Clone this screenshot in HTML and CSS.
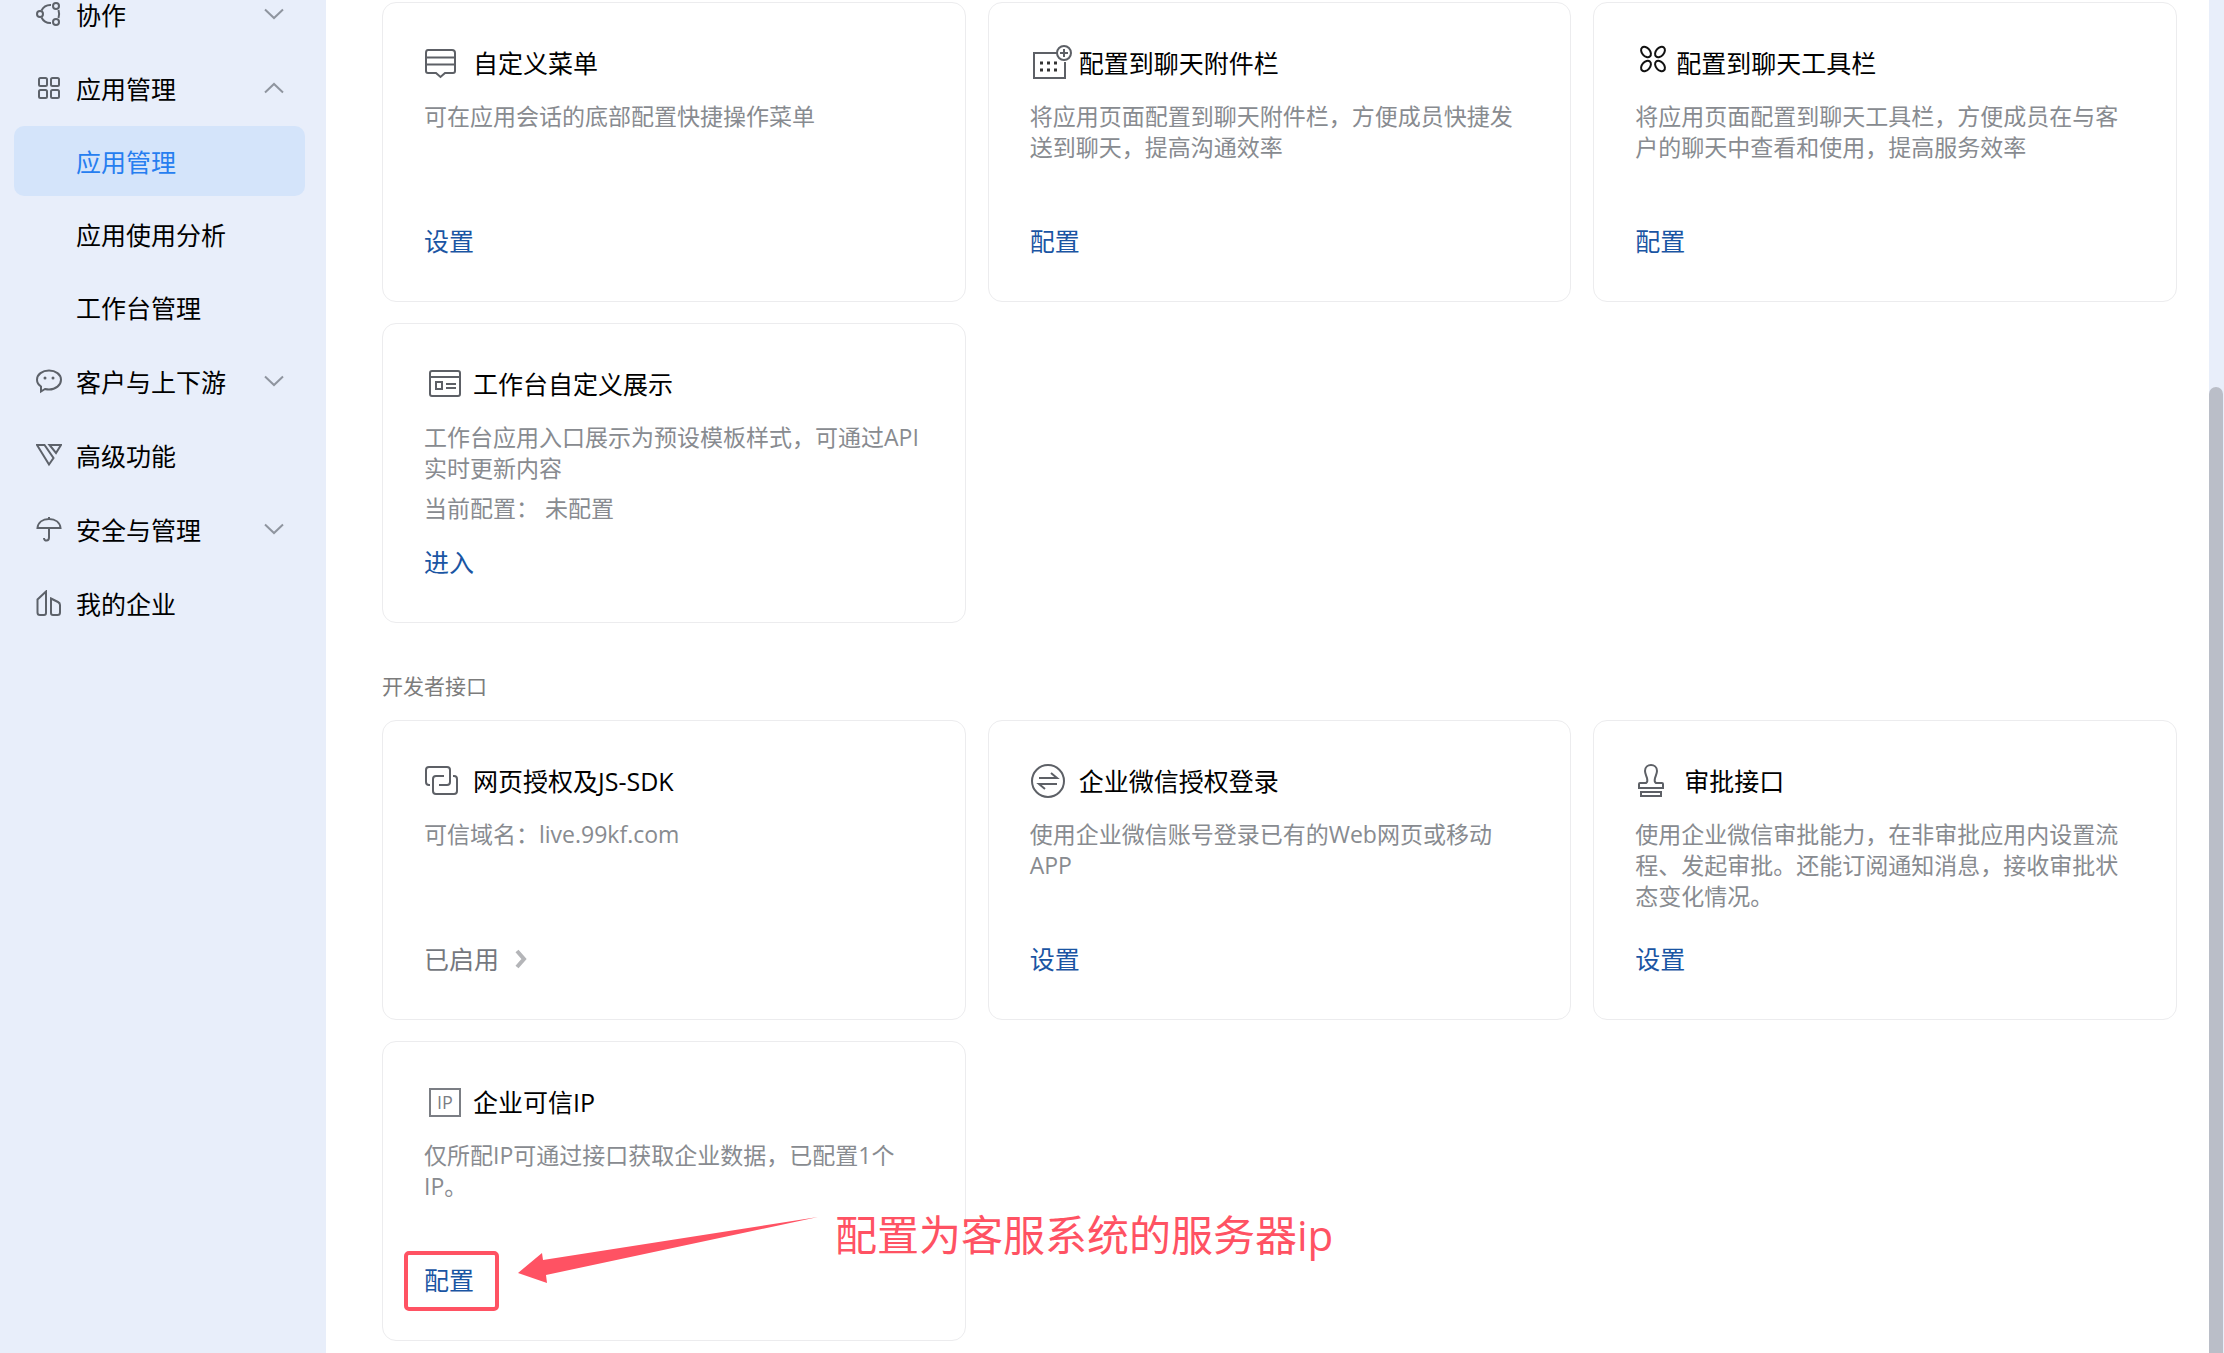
FILE: index.html
```html
<!DOCTYPE html>
<html lang="zh-CN">
<head>
    <meta charset="UTF-8">
    <meta name="viewport" content="width=device-width, initial-scale=1.0">
    <title>应用管理</title>
    <link rel="stylesheet" href="styles.css">
</head>
<body>
<div class="layout">
    <nav class="sidebar">
        <ul class="menu">
            <li>
                <a class="menu-item" href="#">
                    <svg class="menu-icon" viewBox="0 0 26 26"><circle cx="4" cy="13" r="3"/><circle cx="20" cy="5" r="3"/><circle cx="20" cy="21" r="3"/><path d="M5.500 9.500C7.500 5.500 11 3.800 15 4M5.500 16.500C7.500 20.500 11 22.200 15 22M22.500 9C23.300 11.500 23.300 14.500 22.500 17"/></svg>
                    <span>协作</span>
                    <svg class="arrow" viewBox="0 0 20 12"><path d="M1 1.500L10 10L19 1.500"/></svg>
                </a>
            </li>
            <li>
                <a class="menu-item" href="#">
                    <svg class="menu-icon" viewBox="0 0 26 26"><rect x="3" y="3" width="8" height="8" rx="1.500"/><rect x="15" y="3" width="8" height="8" rx="1.500"/><rect x="3" y="15" width="8" height="8" rx="1.500"/><rect x="15" y="15" width="8" height="8" rx="1.500"/></svg>
                    <span>应用管理</span>
                    <svg class="arrow" viewBox="0 0 20 12"><path d="M1 10.500L10 2L19 10.500"/></svg>
                </a>
                <ul class="submenu">
                    <li><a class="menu-item active" href="#">应用管理</a></li>
                    <li><a class="menu-item" href="#">应用使用分析</a></li>
                    <li><a class="menu-item" href="#">工作台管理</a></li>
                </ul>
            </li>
            <li>
                <a class="menu-item" href="#">
                    <svg class="menu-icon" viewBox="0 0 26 26"><path d="M5 18.500C2.500 16.800 1 14.500 1 11.800C1 6.500 6.300 2.500 13 2.500S25 6.500 25 11.800S19.700 21.500 13 21.500C11.500 21.500 10.300 21.300 9 21L5 23.500Z"/><circle class="dot" cx="9" cy="10" r="1.500"/><circle class="dot" cx="17" cy="10" r="1.500"/></svg>
                    <span>客户与上下游</span>
                    <svg class="arrow" viewBox="0 0 20 12"><path d="M1 1.500L10 10L19 1.500"/></svg>
                </a>
            </li>
            <li>
                <a class="menu-item" href="#">
                    <svg class="menu-icon" viewBox="0 0 26 26"><path d="M1 3H8.500L17.500 16L13 22.500ZM13.500 3H25L20 11Z"/></svg>
                    <span>高级功能</span>
                </a>
            </li>
            <li>
                <a class="menu-item" href="#">
                    <svg class="menu-icon" viewBox="0 0 26 26"><path d="M1.500 12C2 6.500 6.500 3 13 3S24 6.500 24.500 12ZM13 1V3M13 12V21.500C13 25.500 8 25.500 8 22"/></svg>
                    <span>安全与管理</span>
                    <svg class="arrow" viewBox="0 0 20 12"><path d="M1 1.500L10 10L19 1.500"/></svg>
                </a>
            </li>
            <li>
                <a class="menu-item" href="#">
                    <svg class="menu-icon" viewBox="0 0 26 26"><path d="M10 1.500V23Q10 25 8 25H4Q1.500 25 1.500 22.500V9.500ZM15 8.500L22 12Q24 13 24 15V22.500Q24 25 21.500 25H17Q15 25 15 23Z"/></svg>
                    <span>我的企业</span>
                </a>
            </li>
        </ul>
    </nav>

    <main class="content">
        <section class="cards">
            <div class="card">
                <h3 class="card-title">
                    <svg class="card-icon" viewBox="0 0 44 36"><path d="M4 5H28Q31 5 31 8V26Q31 28 29 28H21L16.500 32L12 28H4Q2 28 2 26V8Q2 5 4 5ZM2 12.500H31M2 19.500H31"/></svg>
                    自定义菜单
                </h3>
                <p class="card-desc">可在应用会话的底部配置快捷操作菜单</p>
                <a class="card-link" href="#">设置</a>
            </div>
            <div class="card">
                <h3 class="card-title">
                    <svg class="card-icon" viewBox="0 0 44 36"><path d="M27 8H4V33H35V17"/><circle cx="34" cy="8" r="7"/><path d="M30 8H38M34 4V12"/><path class="dots" d="M10 18H13M17 18H20M24 18H27M10 25H13M17 25H20M24 25H27"/></svg>
                    配置到聊天附件栏
                </h3>
                <p class="card-desc">将应用页面配置到聊天附件栏，方便成员快捷发送到聊天，提高沟通效率</p>
                <a class="card-link" href="#">配置</a>
            </div>
            <div class="card">
                <h3 class="card-title tools">
                    <svg class="card-icon dark" viewBox="0 0 44 36"><ellipse cx="11" cy="7" rx="4" ry="6" transform="rotate(-40 11 7)"/><ellipse cx="25" cy="7" rx="4" ry="6" transform="rotate(40 25 7)"/><ellipse cx="11" cy="21" rx="4" ry="6" transform="rotate(40 11 21)"/><ellipse cx="25" cy="21" rx="4" ry="6" transform="rotate(-40 25 21)"/></svg>
                    配置到聊天工具栏
                </h3>
                <p class="card-desc">将应用页面配置到聊天工具栏，方便成员在与客户的聊天中查看和使用，提高服务效率</p>
                <a class="card-link" href="#">配置</a>
            </div>
            <div class="card">
                <h3 class="card-title">
                    <svg class="card-icon" viewBox="0 0 44 36"><rect x="6" y="5" width="30" height="25" rx="2"/><path d="M6 11H36M22 18H32M22 22H32"/><rect x="12" y="16" width="6" height="7"/></svg>
                    工作台自定义展示
                </h3>
                <p class="card-desc">工作台应用入口展示为预设模板样式，可通过API实时更新内容</p>
                <p class="card-status">当前配置： <span>未配置</span></p>
                <a class="card-link" href="#">进入</a>
            </div>
        </section>

        <h2 class="section-title">开发者接口</h2>
        <section class="cards">
            <div class="card">
                <h3 class="card-title">
                    <svg class="card-icon" viewBox="0 0 44 36"><path d="M6 22H5Q2 22 2 19V7Q2 4 5 4H23Q26 4 26 7V19Q26 22 23 22H15"/><path d="M20 13H12Q9 13 9 16V28Q9 31 12 31H30Q33 31 33 28V16Q33 13 30 13H29"/></svg>
                    网页授权及JS-SDK
                </h3>
                <p class="card-desc">可信域名：live.99kf.com</p>
                <a class="card-link enabled" href="#">已启用
                    <svg class="more" viewBox="0 0 12 20"><path d="M2 2L9 10L2 18"/></svg>
                </a>
            </div>
            <div class="card">
                <h3 class="card-title">
                    <svg class="card-icon" viewBox="0 0 44 36"><circle cx="18" cy="18" r="16"/><path d="M9 15H27L21 10M27 21H9L15 26"/></svg>
                    企业微信授权登录
                </h3>
                <p class="card-desc">使用企业微信账号登录已有的Web网页或移动APP</p>
                <a class="card-link" href="#">设置</a>
            </div>
            <div class="card">
                <h3 class="card-title">
                    <svg class="card-icon" viewBox="0 0 44 36"><path d="M4 25V21Q4 20 5 20H11Q13 19 12 15C11 12 10 10 10 8C10 0 22 0 22 8C22 10 21 12 20 15Q19 19 21 20H27Q28 20 28 21V25ZM6 29H26V33H6Z"/></svg>
                    审批接口
                </h3>
                <p class="card-desc">使用企业微信审批能力，在非审批应用内设置流程、发起审批。还能订阅通知消息，接收审批状态变化情况。</p>
                <a class="card-link" href="#">设置</a>
            </div>
            <div class="card">
                <h3 class="card-title">
                    <span class="ip-icon">IP</span>
                    企业可信IP
                </h3>
                <p class="card-desc">仅所配IP可通过接口获取企业数据，已配置1个IP。</p>
                <a class="card-link" href="#">配置</a>
                <!-- note on top of the card -->
                <div class="note-box"></div>
                <svg class="note-arrow" viewBox="0 0 300 68"><path d="M0 57L24 37L25 44L300 1L28 59L29 67Z"/></svg>
                <div class="note-text">配置为客服系统的服务器ip</div>
            </div>
        </section>
    </main>
    <div class="scrollbar"><div class="thumb"></div></div>
</div>
</body>
</html>
```
FILE: styles.css
```css
* {
    box-sizing: border-box;
}
body {
    margin: 0;
    font-family: "Open Sans", "Noto Sans CJK SC", sans-serif;
    font-size: 25px;
    color: #000;
    background-color: #fff;
}
a {
    color: inherit;
    text-decoration: none;
}
ul, h2, h3, p {
    margin: 0;
    padding: 0;
    font-weight: 400;
    list-style: none;
}
svg {
    fill: none;
    stroke-width: 2;
    flex-shrink: 0;
}
.layout {
    display: flex;
    height: 100vh;
    overflow: hidden;
}

/* left menu, scrolled past its first items */
.sidebar {
    width: 326px;
    flex-shrink: 0;
    padding: 0 21px 0 14px;
    background-color: #e8eefa;
}
.menu {
    display: flex;
    flex-direction: column;
    gap: 4px;
    margin-top: -21px;
}
.menu-item {
    display: flex;
    align-items: center;
    height: 70px;
    padding: 0 21px 0 22px;
    border-radius: 10px;
}
.submenu {
    display: flex;
    flex-direction: column;
    gap: 3px;
    margin-top: 3px;
}
.submenu .menu-item {
    padding-left: 62px;
}
.menu-item.active {
    background-color: #d4e4fa;
    color: #267ef0;
}
.menu-icon {
    width: 26px;
    height: 26px;
    margin-right: 14px;
    stroke: #5d626a;
}
.menu-icon .dot {
    fill: #5d626a;
    stroke: none;
}
.arrow {
    width: 20px;
    height: 12px;
    margin-left: auto;
    stroke: #8f959f;
}

/* cards */
.content {
    flex: 1;
    padding: 2px 32px 0 56px;
}
.cards {
    display: grid;
    grid-template-columns: repeat(3, 1fr);
    gap: 21px 22px;
}
.card {
    position: relative;
    display: flex;
    flex-direction: column;
    align-items: flex-start;
    min-height: 300px;
    padding: 42px 42px 42px 41px;
    border: 1px solid #ececee;
    border-radius: 14px;
}
.card-title {
    display: flex;
    align-items: center;
    font-size: 25px;
    line-height: 36px;
}
.card-icon {
    width: 44px;
    height: 36px;
    margin-right: 5px;
    stroke: #5d6066;
}
.card-icon.dark {
    stroke: #111;
}
.card-icon .dots {
    stroke: #333;
    stroke-width: 3;
}
.tools .card-icon {
    margin-right: -3px;
}
.ip-icon {
    width: 32px;
    height: 29px;
    margin: 0 12px 0 5px;
    border: 2px solid #7b7e84;
    font-size: 18px;
    line-height: 25px;
    text-align: center;
    color: #7b7e84;
}
.card-desc {
    margin-top: 20px;
    font-size: 23px;
    line-height: 31px;
    color: #888b90;
}
.card-status {
    margin-top: 9px;
    font-size: 23px;
    line-height: 31px;
    color: #888b90;
}
.card-link {
    display: flex;
    align-items: center;
    margin-top: auto;
    line-height: 36px;
    color: #1a55a3;
}
.card-link.enabled {
    color: #75787e;
}
.more {
    width: 12px;
    height: 20px;
    margin-left: 16px;
    stroke: #b4b5b8;
    stroke-width: 4;
}
.section-title {
    margin: 49px 0 20px;
    font-size: 21px;
    line-height: 28px;
    color: #7c7c7c;
}

/* red note */
.note-box {
    position: absolute;
    left: 21px;
    top: 209px;
    width: 95px;
    height: 60px;
    border: 4px solid #ff5263;
    border-radius: 5px;
}
.note-arrow {
    position: absolute;
    left: 135px;
    top: 174px;
    width: 300px;
    height: 68px;
    fill: #ff5263;
}
.note-text {
    position: absolute;
    left: 452px;
    top: 165px;
    font-size: 42px;
    line-height: 56px;
    white-space: nowrap;
    color: #ff5263;
}

.scrollbar {
    display: flex;
    width: 15px;
    padding: 387px 1px 0 0;
    background-color: #e8eefa;
}
.thumb {
    flex: 1;
    border-radius: 7px 7px 0 0;
    background-color: #babec8;
}
```
